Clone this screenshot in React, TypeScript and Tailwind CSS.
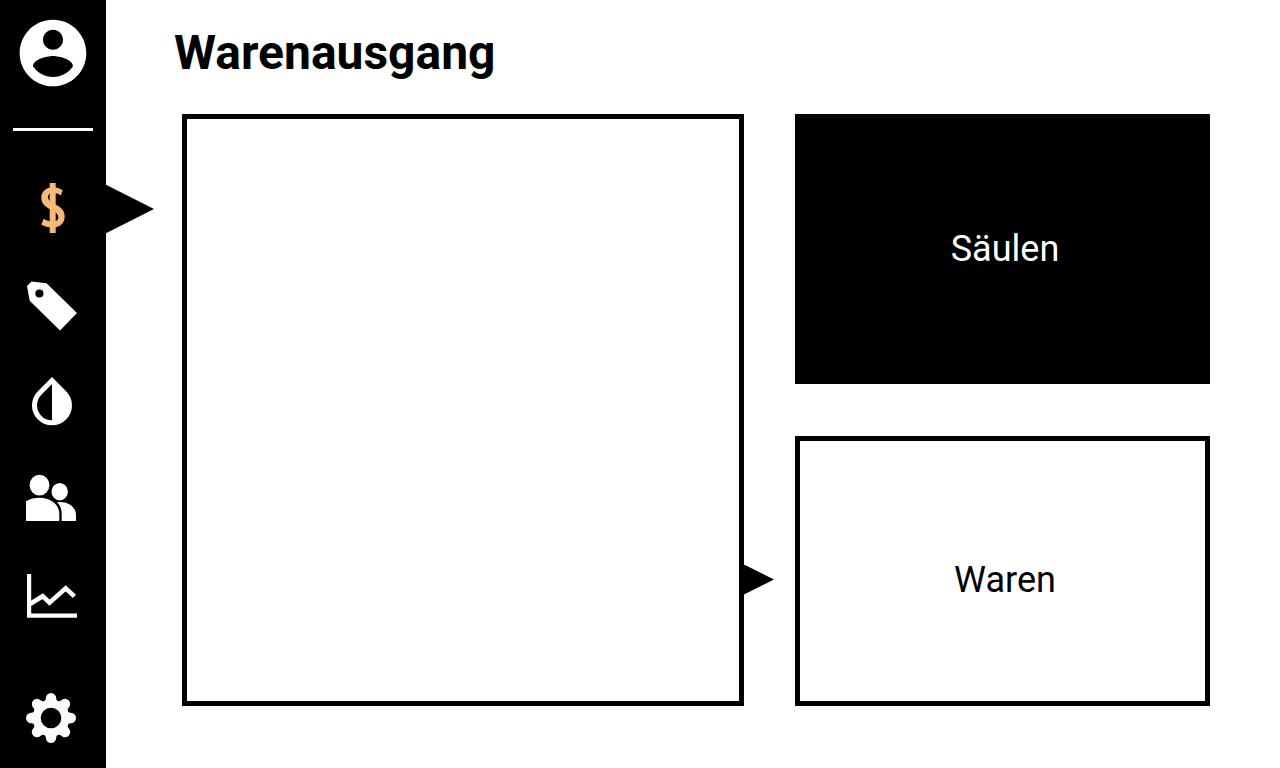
import type { ReactNode } from 'react';

const lobes = [0, 45, 90, 135, 180, 225, 270, 315];

function Icon({ children }: { children: ReactNode }) {
  return (
    <svg viewBox="0 0 60 60" className="block size-[60px]" fill="currentColor" aria-hidden="true">
      {children}
    </svg>
  );
}

const navItems = [
  {
    label: 'Warenausgang',
    active: true,
    icon: (
      <Icon>
        <path d="M26.7 5h6v50h-6z" />
        <path d="M39.8 12.2C36.5 10.2 33.5 9.2 30 9.2C23 9.2 18.3 13.5 18.3 19.5C18.3 25.5 22 28.6 27 31.2C32.5 34 35.3 35.8 35.3 39.3C35.3 42.3 33 43.6 29.8 43.6C26.3 43.6 23.5 42.4 20.7 40.7L18.3 46.5C21.5 48.3 25 49.5 29.5 49.5C37 49.5 41.7 45 41.7 38.5C41.7 32 37.5 29.2 32.5 26.6C27.5 24 25 22 25 19C25 16.3 27 14.8 30 14.8C32.8 14.8 35.2 15.9 37.7 17.4z" />
      </Icon>
    ),
  },
  {
    label: 'Preise',
    active: false,
    icon: (
      <Icon>
        <path
          fillRule="evenodd"
          d="M8.5 5.5L23.5 7.3L54 37L37 54.4L6.7 24.8L4 10zM16.4 13.4a4.1 4.1 0 1 0 0 8.2a4.1 4.1 0 1 0 0-8.2z"
        />
      </Icon>
    ),
  },
  {
    label: 'Farben',
    active: false,
    icon: (
      <Icon>
        <path
          transform="translate(-1 -2.7) scale(2.5)"
          d="M17.66 7.93L12 2.27 6.34 7.93c-3.12 3.12-3.12 8.19 0 11.31C7.9 20.8 9.95 21.58 12 21.58s4.1-.78 5.66-2.34c3.12-3.12 3.12-8.19 0-11.31zM12 19.59c-1.6 0-3.11-.62-4.24-1.76C6.62 16.69 6 15.19 6 13.59s.62-3.11 1.76-4.24L12 5.1v14.49z"
        />
      </Icon>
    ),
  },
  {
    label: 'Kunden',
    active: false,
    icon: (
      <Icon>
        <ellipse cx="16.5" cy="13.2" rx="9.9" ry="10.4" />
        <ellipse cx="36.7" cy="19.7" rx="8.2" ry="8.7" />
        <path d="M3 29.3C7 26.8 11.5 25.7 16.5 25.7C28 25.7 36.3 32.5 36.3 42V49H3z" />
        <path d="M34 30.2C35 30 36 30 37 30C46 30 53 35.5 53 43V49H38.7V42C38.7 37 37 33 34 30.2z" />
      </Icon>
    ),
  },
  {
    label: 'Statistik',
    active: false,
    icon: (
      <Icon>
        <path d="M4 4h4.2v39.4H54v4.3H4z" />
        <path
          d="M7 34L19.7 26.2L26.5 32.6L42.7 18.3L51.4 26.4"
          fill="none"
          stroke="currentColor"
          strokeWidth="4.6"
        />
      </Icon>
    ),
  },
];

const buttonBase = 'relative flex w-full cursor-pointer justify-center';

function Sidebar() {
  return (
    <aside className="flex w-[106px] shrink-0 flex-col items-center bg-black pt-[13px] pb-5 text-white">
      <button type="button" aria-label="Konto" className="cursor-pointer">
        <svg viewBox="0 0 24 24" className="block size-20" fill="currentColor" aria-hidden="true">
          <path d="M12 2C6.48 2 2 6.48 2 12s4.48 10 10 10 10-4.48 10-10S17.52 2 12 2zm0 3c1.66 0 3 1.34 3 3s-1.34 3-3 3-3-1.34-3-3 1.34-3 3-3zm0 14.2c-2.5 0-4.71-1.28-6-3.22.03-1.99 4-3.08 6-3.08 1.99 0 5.97 1.09 6 3.08-1.29 1.94-3.5 3.22-6 3.22z" />
        </svg>
      </button>
      <hr className="mt-[35px] w-20 border-t-3 border-white" />
      <nav className="mt-[47px] flex w-full flex-col gap-[38px]">
        {navItems.map((item) => (
          <button
            key={item.label}
            type="button"
            aria-label={item.label}
            className={item.active ? `${buttonBase} text-[#f8b878]` : buttonBase}
          >
            {item.icon}
            {item.active && (
              <svg
                viewBox="0 0 48 50"
                className="absolute top-[6px] left-full h-[50px] w-12 text-black"
                fill="currentColor"
                aria-hidden="true"
              >
                <path d="M0 .7L48 25L0 49.3z" />
              </svg>
            )}
          </button>
        ))}
      </nav>
      <button type="button" aria-label="Einstellungen" className={`${buttonBase} mt-auto text-[#fcfcff]`}>
        <Icon>
          <circle cx="28" cy="30" r="14.2" fill="none" stroke="currentColor" strokeWidth="7.8" />
          {lobes.map((angle) => (
            <path
              key={angle}
              transform={`rotate(${angle} 28 30)`}
              d="M20.8 13.3C22.2 12.6 22.8 11.6 22.8 10.2A5.2 5.2 0 0 1 33.2 10.2C33.2 11.6 33.8 12.6 35.2 13.3L33 17H23z"
            />
          ))}
        </Icon>
      </button>
    </aside>
  );
}

export default function App() {
  return (
    <div className="flex min-h-screen bg-white font-['Roboto',sans-serif] text-black">
      <Sidebar />
      <main className="flex grow flex-col pt-[25px] pr-[70px] pb-[62px] pl-[68px]">
        <h1 className="text-5xl leading-[56px] font-bold">Warenausgang</h1>
        <div className="mt-[33px] ml-2 grid grow grid-cols-[562fr_415fr] gap-[51px]">
          <section aria-label="Auswahl" className="border-5 border-black" />
          <div className="grid grid-rows-2 gap-[52px]">
            <button
              type="button"
              className="flex cursor-pointer items-center justify-center bg-black pl-[5px] text-4xl text-white"
            >
              Säulen
            </button>
            <button
              type="button"
              className="relative flex cursor-pointer items-center justify-center border-5 border-black pt-[18px] pl-[5px] text-4xl"
            >
              <svg
                viewBox="0 0 30 30"
                className="absolute top-[calc(50%-6px)] -left-14 size-[30px]"
                fill="currentColor"
                aria-hidden="true"
              >
                <path d="M0 -.5L30 14.5L0 29.5z" />
              </svg>
              Waren
            </button>
          </div>
        </div>
      </main>
    </div>
  );
}
